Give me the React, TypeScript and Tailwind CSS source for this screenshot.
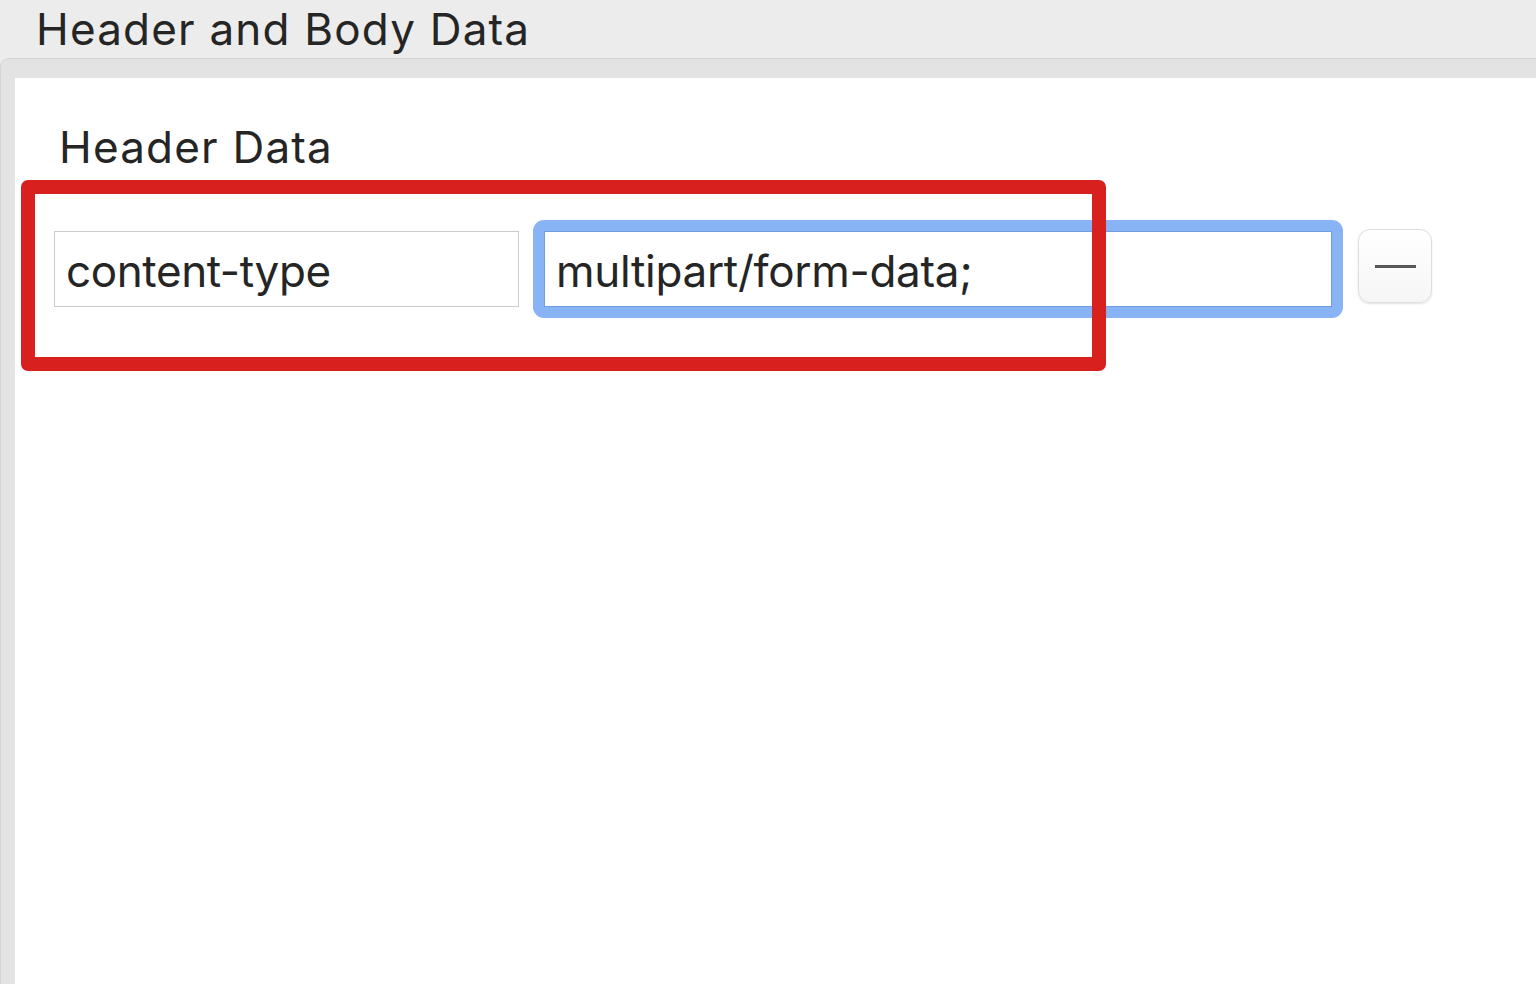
import React from 'react';

const font = { fontFamily: 'Inter, "Liberation Sans", sans-serif' };

function MinusButton() {
  return (
    <button
      type="button"
      className="mt-[9px] flex h-[74px] w-[74px] items-center justify-center rounded-[12px] border border-[#dedede] bg-gradient-to-b from-white to-[#f6f6f6] shadow-[0_1px_2px_rgba(0,0,0,0.12)]"
    >
      <span className="block h-[3px] w-[41px] bg-[#575757]" />
    </button>
  );
}

export default function App() {
  return (
    <div
      className="relative flex h-[984px] w-[1536px] flex-col overflow-hidden bg-[#ececec] text-[#252525]"
      style={font}
    >
      {/* window title */}
      <div className="h-[58px] shrink-0 pl-[36px] pt-[7px] text-[44px] leading-[44px] tracking-[1.2px]">
        Header and Body Data
      </div>

      {/* group box */}
      <div className="flex flex-1 flex-col rounded-tl-[9px] border-l border-t border-[#d4d4d4] bg-[#e3e3e3] pl-[14px] pt-[19px]">
        <div className="flex-1 bg-white pl-[39px] pt-[47px]">
          <div className="pl-[5px] text-[44px] leading-[44px] tracking-[1.2px]">Header Data</div>

          <div className="mt-[51px] flex items-start">
            <input
              readOnly
              value="content-type"
              className="mt-[11px] h-[76px] w-[465px] border border-[#cbcbcb] bg-white pl-[11px] pt-[4px] text-[44px] tracking-[-0.4px] text-[#252525] outline-none"
              style={font}
            />
            <div className="ml-[14px] rounded-[11px] bg-[#88b4f6] p-[11px]">
              <input
                readOnly
                value="multipart/form-data;"
                className="h-[76px] w-[788px] border border-[#6d9de3] bg-white pl-[11px] pt-[4px] text-[44px] tracking-[-0.3px] text-[#252525] outline-none"
                style={font}
              />
            </div>
            <div className="ml-[15px]">
              <MinusButton />
            </div>
          </div>
        </div>
      </div>

      {/* annotation */}
      <div className="pointer-events-none absolute left-[21px] top-[180px] h-[191px] w-[1085px] rounded-[7px] border-[14px] border-[#d8201f]" />
    </div>
  );
}
